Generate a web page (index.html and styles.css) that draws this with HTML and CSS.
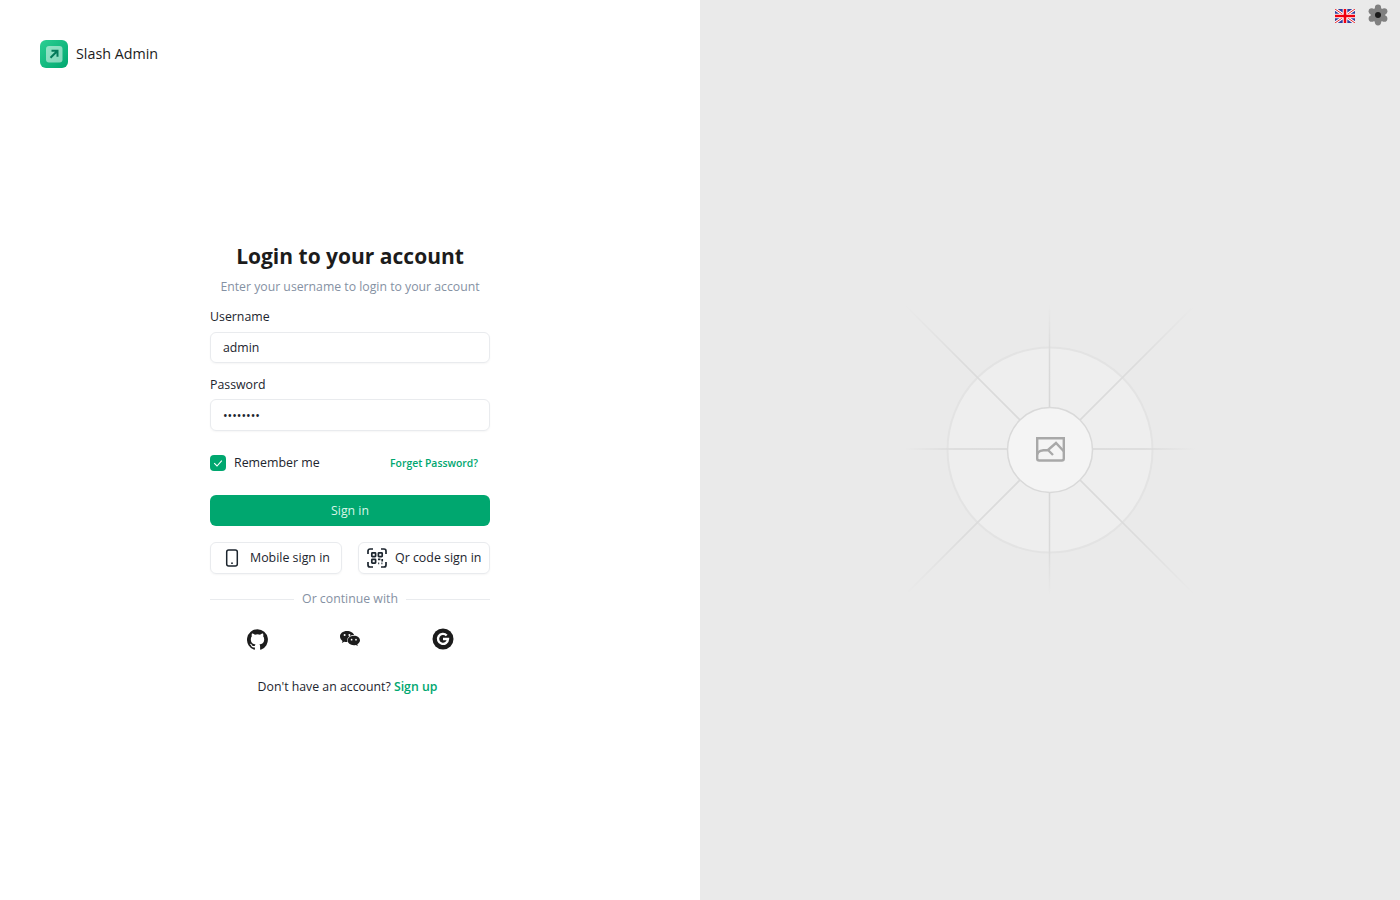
FILE: index.html
```html
<!DOCTYPE html>
<html lang="en">
<head>
<meta charset="utf-8">
<title>Slash Admin</title>
<link rel="stylesheet" href="styles.css">
</head>
<body>
<div class="page">
  <section class="left">
    <header class="brand">
      <svg class="logo" width="28" height="28" viewBox="0 0 28 28">
        <defs><linearGradient id="lg" x1="0" y1="0" x2="1" y2="1"><stop offset="0" stop-color="#2ccf93"/><stop offset="1" stop-color="#00a76f"/></linearGradient></defs>
        <rect width="28" height="28" rx="6" fill="url(#lg)"/>
        <rect x="6" y="6" width="16.500" height="16.500" rx="3" fill="#fff" opacity=".5"/>
        <path d="M10.500 17.800 L17 11.300 M11.500 10.800 H17.500 V16.800" fill="none" stroke="#04795a" stroke-width="2"/>
      </svg>
      <span class="brand-name">Slash Admin</span>
    </header>
    <main class="form-wrap">
      <form class="form">
        <h1 class="title">Login to your account</h1>
        <p class="subtitle">Enter your username to login to your account</p>
        <label class="label label-user">Username</label>
        <div class="input">admin</div>
        <label class="label label-pass">Password</label>
        <div class="input input-pass">••••••••</div>
        <div class="row-remember">
          <span class="check"><svg width="16" height="16" viewBox="0 0 16 16"><path d="M4.200 8.200 L7 11 L11.800 5.600" fill="none" stroke="#fff" stroke-width="1.100"/></svg></span>
          <span class="remember">Remember me</span>
          <a class="forgot">Forget Password?</a>
        </div>
        <button type="button" class="signin">Sign in</button>
        <div class="alt-row">
          <div class="alt alt-mobile">
            <svg width="16" height="18" viewBox="0 0 16 18"><rect x="2.700" y="1" width="10.600" height="16" rx="2" fill="none" stroke="#1c252e" stroke-width="1.500"/><circle cx="8" cy="14.200" r=".9" fill="#1c252e"/></svg>
            <span>Mobile sign in</span>
          </div>
          <div class="alt alt-qr">
            <svg width="20" height="20" viewBox="0 0 20 20" fill="none" stroke="#1c252e" stroke-width="1.700"><path d="M1 6V3a2 2 0 0 1 2-2h3M14 1h3a2 2 0 0 1 2 2v3M1 14v3a2 2 0 0 0 2 2h3M19 14v3a2 2 0 0 1-2 2h-3"/><rect x="4.800" y="4.800" width="3.800" height="3.800" rx=".6"/><rect x="11.400" y="4.800" width="3.800" height="3.800" rx=".6"/><rect x="4.800" y="11.400" width="3.800" height="3.800" rx=".6"/><path d="M11 11.300h2.400M15.200 11v2.400M11.200 15.400h1M14.400 15.400h1"/></svg>
            <span>Qr code sign in</span>
          </div>
        </div>
        <div class="divider"><span>Or continue with</span></div>
        <div class="socials">
          <svg width="21" height="21" viewBox="0 0 16 16" fill="#1c1c1c"><path d="M8 .2a8 8 0 0 0-2.530 15.590c.4.070.55-.170.55-.380v-1.400c-2.230.480-2.700-1.070-2.700-1.070-.360-.930-.890-1.170-.890-1.170-.730-.5.050-.490.050-.490.8.060 1.230.830 1.230.830.720 1.220 1.870.870 2.330.660.070-.520.280-.870.5-1.070-1.770-.2-3.640-.890-3.640-3.950 0-.870.310-1.590.820-2.150-.080-.2-.360-1.020.080-2.120 0 0 .670-.210 2.200.820a7.700 7.700 0 0 1 4 0c1.530-1.040 2.200-.820 2.200-.820.440 1.100.160 1.920.080 2.120.510.560.820 1.270.820 2.150 0 3.070-1.870 3.750-3.650 3.950.290.250.540.730.540 1.480v2.200c0 .210.150.460.550.380A8 8 0 0 0 8 .2z"/></svg>
          <svg width="20" height="16" viewBox="1 1 20 15.800" fill="#1c1c1c"><path d="M8 1C3.900 1 1 3.400 1 6.500c0 1.800 1 3.200 2.500 4.300l-.6 2 2.300-1.200c.9.300 1.700.4 2.600.4h.6a5 5 0 0 1-.2-1.500C8.200 7.400 11 5 14.600 5h.5C14.400 2.700 11.500 1 8 1z"/><path d="M21 10.400c0-2.800-2.700-4.700-6.200-4.700S8.600 7.900 8.600 10.400s2.700 4.700 6.200 4.700c.7 0 1.400-.1 2.100-.3l1.900 1-.5-1.700c1.500-1 2.700-2.200 2.700-3.700z"/><circle cx="5.600" cy="5" r="1" fill="#fff"/><circle cx="10.400" cy="5" r="1" fill="#fff"/><circle cx="12.600" cy="9.600" r=".85" fill="#fff"/><circle cx="17" cy="9.600" r=".85" fill="#fff"/></svg>
          <svg width="22" height="22" viewBox="0 0 22 22"><circle cx="11" cy="11" r="10.500" fill="#1c1c1c"/><path d="M14.700 7.500A5 5 0 1 0 16 11H11" fill="none" stroke="#fff" stroke-width="2.400"/></svg>
        </div>
        <p class="signup">Don't have an account? <a>Sign up</a></p>
      </form>
    </main>
  </section>
  <section class="right">
    <div class="tools">
      <svg class="flag" width="20" height="14" viewBox="0 0 20 14">
        <rect width="20" height="14" fill="#2f3f9e"/>
        <path d="M0 0L20 14M20 0L0 14" stroke="#fff" stroke-width="3"/>
        <path d="M0 0L20 14M20 0L0 14" stroke="#e4262c" stroke-width="1"/>
        <path d="M10 0V14M0 7H20" stroke="#fff" stroke-width="4.600"/>
        <path d="M10 0V14M0 7H20" stroke="#f0000f" stroke-width="2.600"/>
      </svg>
      <svg class="gear" width="22" height="22" viewBox="0 0 22 22">
        <g fill="#808080">
          <circle cx="11" cy="11" r="7.400"/>
          <circle cx="11" cy="3.700" r="3.100"/>
          <circle cx="11" cy="18.300" r="3.100"/>
          <circle cx="4.700" cy="7.350" r="3.100"/>
          <circle cx="17.300" cy="7.350" r="3.100"/>
          <circle cx="4.700" cy="14.650" r="3.100"/>
          <circle cx="17.300" cy="14.650" r="3.100"/>
        </g>
        <circle cx="11" cy="11" r="3" fill="#1a1a1a"/>
      </svg>
    </div>
    <div class="art">
      <svg width="300" height="300" viewBox="0 0 300 300">
        <defs>
          <radialGradient id="fade" gradientUnits="userSpaceOnUse" cx="150" cy="150" r="146">
            <stop offset="0" stop-color="#d6d6d6"/>
            <stop offset=".65" stop-color="#d9d9d9"/>
            <stop offset="1" stop-color="#eaeaea"/>
          </radialGradient>
          <radialGradient id="fade-d" gradientUnits="userSpaceOnUse" cx="150" cy="150" r="204">
            <stop offset="0" stop-color="#d9d9d9"/>
            <stop offset=".6" stop-color="#dcdcdc"/>
            <stop offset="1" stop-color="#eaeaea"/>
          </radialGradient>
        </defs>
        <circle cx="150" cy="150" r="102.500" fill="#eeeeee" stroke="#e3e3e3" stroke-width="2"/>
        <path d="M149.500 5V295M5 149H295" stroke="url(#fade)" stroke-width="1.500" fill="none"/>
        <path d="M6 6L294 294M294 6L6 294" stroke="url(#fade-d)" stroke-width="1.700" fill="none"/>
        <circle cx="150" cy="150" r="42.500" fill="#f4f4f4" stroke="#d9d9d9" stroke-width="1.500"/>
        <path d="M137.200 138.200H163.800V158.500a2 2 0 0 1-2 2H139.200a2 2 0 0 1-2-2Z" fill="none" stroke="#a8a8a8" stroke-width="2.400"/>
        <path d="M137 154.500C138.500 151 141 150 148 150L156 143L164 151.500M148 150L153 155" fill="none" stroke="#a8a8a8" stroke-width="2.400"/>
      </svg>
    </div>
  </section>
</div>
</body>
</html>
```
FILE: styles.css
```css
* { box-sizing: border-box; }
html, body { margin: 0; height: 100%; }
body { font-family: "Open Sans", "Noto Sans", sans-serif; color: #1c252e; background: #fff; }
p, h1 { margin: 0; }

.page { display: grid; grid-template-columns: 700px 700px; height: 900px; overflow: hidden; }

.left { display: flex; flex-direction: column; padding: 40px; }
.brand { display: flex; align-items: center; gap: 8px; height: 28px; }
.logo { display: block; }
.brand-name { font-size: 14.300px; line-height: 28px; height: 28px; color: #1c1c1c; font-weight: 450; }

.form-wrap { flex: 1; display: flex; justify-content: center; padding-top: 172px; }
.form { width: 280px; display: flex; flex-direction: column; }

.title { font-size: 21px; line-height: 33px; font-weight: 700; text-align: center; color: #1c1c1c; height: 33px; }
.subtitle { font-size: 12.250px; line-height: 20px; text-align: center; color: #8591a3; margin-top: 4px; white-space: nowrap; font-weight: 450; }

.label { font-size: 12.350px; line-height: 20px; color: #1c252e; font-weight: 450; }
.label-user { margin-top: 10px; }
.label-pass { margin-top: 12px; }

.input { height: 31px; margin-top: 5px; padding: 0 12px; border: 1px solid #e9ebee; border-radius: 6px; font-size: 12.300px; line-height: 29px; color: #1c252e; box-shadow: 0 1px 2px rgba(0,0,0,.04); font-weight: 450; }
.input-pass { height: 32px; margin-top: 4px; line-height: 32px; }

.row-remember { display: flex; align-items: center; margin-top: 22px; height: 20px; }
.check { width: 16px; height: 16px; border-radius: 4px; background: #00a76f; display: block; }
.check svg { display: block; }
.remember { font-size: 12.400px; line-height: 20px; height: 20px; margin-left: 8px; color: #1c252e; font-weight: 450; }
.forgot { margin-left: auto; margin-right: 12px; font-size: 10.400px; font-weight: 600; color: #00a76f; }

.signin { height: 31px; margin-top: 22px; border: 0; border-radius: 6px; background: #00a76f; color: #d8f5e7; font: 500 12.300px "Open Sans", sans-serif; padding: 0; }

.alt-row { display: grid; grid-template-columns: 132px 132px; justify-content: space-between; margin-top: 16px; }
.alt { height: 32px; border: 1px solid #e9ebee; border-radius: 6px; display: flex; align-items: center; font-size: 12.400px; color: #1c252e; box-shadow: 0 1px 2px rgba(0,0,0,.04); white-space: nowrap; font-weight: 450; }
.alt span { line-height: 20px; height: 20px; }
.alt svg { display: block; flex: none; }
.alt-mobile { padding-left: 13px; gap: 10px; }
.alt-qr { padding-left: 8px; gap: 8px; }

.divider { display: flex; align-items: center; gap: 8px; margin-top: 15px; font-size: 12.300px; line-height: 20px; color: #8591a3; font-weight: 450; }
.divider::before, .divider::after { content: ""; flex: 1; height: 1px; background: #e9ebee; }

.socials { display: flex; justify-content: space-between; align-items: center; margin-top: 19px; padding: 0 36px 0 37px; height: 22px; }
.socials svg { display: block; }

.signup { margin-top: 27px; font-size: 12.300px; line-height: 20px; text-align: center; padding-right: 5px; color: #1c252e; font-weight: 450; }
.signup a { color: #00a76f; font-weight: 550; }

.right { background: #eaeaea; display: flex; flex-direction: column; position: relative; }
.tools { position: absolute; top: 4px; right: 11px; display: flex; align-items: center; gap: 12px; }
.flag { display: block; margin-top: 2px; filter: blur(.3px); }
.gear { display: block; filter: blur(.6px); }
.art { flex: 1; display: flex; align-items: center; justify-content: center; }
.art svg { display: block; }
```
